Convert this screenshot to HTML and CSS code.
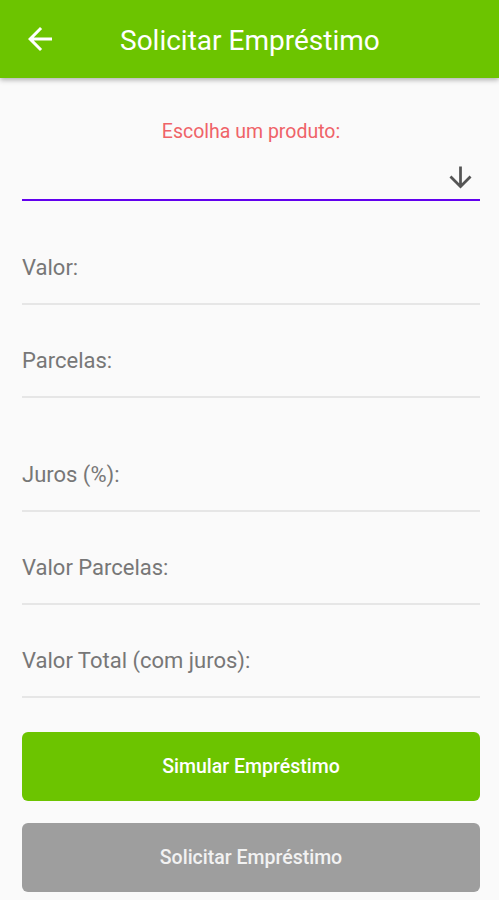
FILE: index.html
```html
<!DOCTYPE html>
<html lang="pt-BR">
<head>
    <meta charset="UTF-8">
    <meta name="viewport" content="width=device-width, initial-scale=1.0">
    <title>Solicitar Empréstimo</title>
    <link rel="stylesheet" href="styles.css">
</head>
<body>
    <header class="app-bar">
        <button class="back-button" aria-label="Voltar">
            <svg viewBox="0 0 24 24" width="36" height="36"><path d="M20 11H7.83l5.59-5.59L12 4l-8 8 8 8 1.41-1.41L7.83 13H20v-2z" fill="#fff"/></svg>
        </button>
        <h1>Solicitar Empréstimo</h1>
    </header>

    <main class="content">
        <div class="product">
            <label class="product-label">Escolha um produto:</label>
            <div class="select">
                <svg viewBox="0 0 24 24" width="33" height="33"><path d="M20 12l-1.41-1.41L13 16.17V4h-2v12.17l-5.58-5.59L4 12l8 8 8-8z" fill="#555"/></svg>
            </div>
        </div>

        <div class="field first"><span>Valor:</span></div>
        <div class="field"><span>Parcelas:</span></div>
        <div class="field spaced"><span>Juros (%):</span></div>
        <div class="field"><span>Valor Parcelas:</span></div>
        <div class="field"><span>Valor Total (com juros):</span></div>

        <div class="actions">
            <button class="btn btn-green">Simular Empréstimo</button>
            <button class="btn btn-gray">Solicitar Empréstimo</button>
        </div>
    </main>
</body>
</html>
```

FILE: styles.css
```css
body {
    margin: 0;
    background-color: #fafafa;
    font-family: Roboto, "Noto Sans", sans-serif;
}

.app-bar {
    height: 78px;
    background-color: #6cc400;
    display: flex;
    align-items: center;
    gap: 62px;
    padding: 0 22px;
    box-shadow: 0 2px 5px rgba(0, 0, 0, 0.3);
}

.back-button {
    background: none;
    border: none;
    padding: 0;
    display: flex;
    cursor: pointer;
}

.app-bar h1 {
    margin: 0;
    color: #fff;
    font-size: 28px;
    font-weight: 400;
    padding-top: 2px;
}

.content {
    padding: 0 19px 0 22px;
}

.product {
    padding-top: 42px;
}

.product-label {
    display: block;
    text-align: center;
    color: #ef6368;
    font-size: 19.5px;
    line-height: 24px;
}

.select {
    height: 57px;
    border-bottom: 2px solid #6200ee;
    display: flex;
    justify-content: flex-end;
    align-items: flex-end;
    padding-right: 3px;
    padding-bottom: 5px;
    box-sizing: border-box;
}

.field {
    padding: 44px 0 23px;
    border-bottom: 2px solid #e6e6e6;
    color: #777;
    font-size: 22px;
    line-height: 24px;
}

.field.first {
    padding-top: 55px;
}

.field.spaced {
    padding-top: 65px;
}

.actions {
    display: flex;
    flex-direction: column;
    gap: 22px;
    padding-top: 34px;
}

.btn {
    height: 69px;
    border: none;
    border-radius: 6px;
    color: #fff;
    font-family: Roboto, "Noto Sans", sans-serif;
    font-size: 19.5px;
    font-weight: 500;
    cursor: pointer;
}

.btn-green {
    background-color: #6cc400;
}

.btn-gray {
    background-color: #9e9e9e;
    color: #f2f2f2;
}
```
